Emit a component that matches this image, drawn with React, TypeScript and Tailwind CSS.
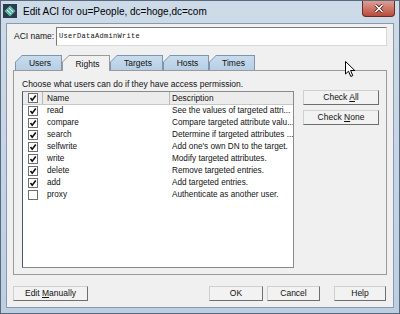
import React from "react";

const rights = [
  { name: "read", desc: "See the values of targeted attri...", on: true },
  { name: "compare", desc: "Compare targeted attribute valu...", on: true },
  { name: "search", desc: "Determine if targeted attributes ...", on: true },
  { name: "selfwrite", desc: "Add one's own DN to the target.", on: true },
  { name: "write", desc: "Modify targeted attributes.", on: true },
  { name: "delete", desc: "Remove targeted entries.", on: true },
  { name: "add", desc: "Add targeted entries.", on: true },
  { name: "proxy", desc: "Authenticate as another user.", on: false },
];

const Check = ({ on }: { on: boolean }) => (
  <div className="w-[10px] h-[10px] border border-[#6f6f6f] bg-white flex items-center justify-center">
    {on && (
      <svg width="8" height="8" viewBox="0 0 8 8">
        <path d="M1.5 4 L3.2 6.2 L6.8 1.5" stroke="#111" strokeWidth="1.6" fill="none" />
      </svg>
    )}
  </div>
);

const Btn = ({ children, w }: { children: React.ReactNode; w: string }) => (
  <button
    className={`${w} h-[15px] flex items-center justify-center bg-[#f2f2f2] border border-t-[#d0d0d0] border-l-[#d0d0d0] border-b-[#6e6e6e] border-r-[#6e6e6e] text-[8.5px] text-[#111] leading-none`}
  >
    <span className="whitespace-pre">{children}</span>
  </button>
);

const tabs = [
  { label: "Users", w: "w-[47px]" },
  { label: "Rights", w: "w-[48px]", sel: true },
  { label: "Targets", w: "w-[53px]" },
  { label: "Hosts", w: "w-[46px]" },
  { label: "Times", w: "w-[46px]" },
];

export default function App() {
  return (
    <div
      className="relative w-[400px] h-[314px] overflow-hidden flex flex-col border border-[#5a6a7c] bg-gradient-to-b from-[#cddbe9] to-[#bccfe2] text-[#111]"
      style={{ fontFamily: '"Liberation Sans", Arial, sans-serif' }}
    >
      {/* title bar */}
      <div className="h-[22px] flex items-start pl-[2px] shrink-0">
        <svg width="14" height="14" viewBox="0 0 14 14" className="mt-[3px]">
          <rect x="0" y="0" width="14" height="14" fill="#2c3b4c" />
          <path d="M7 1.5 L12.5 7 L7 12.5 L1.5 7 Z" fill="#5fb8a8" />
          <path d="M4 6 L8 10 M6 4 L10 8" stroke="#dff3ef" strokeWidth="1" />
        </svg>
        <span className="ml-[6px] mt-[4px] text-[10px] leading-[14px] text-black">
          Edit ACI for ou=People, dc=hoge,dc=com
        </span>
        <div className="ml-auto mr-[4px] w-[33px] h-[16px] rounded-b-[4px] border border-t-0 border-[#6a2b22] bg-gradient-to-b from-[#dba097] to-[#b94a3a] flex items-center justify-center">
          <svg width="10" height="9" viewBox="0 0 10 9">
            <path d="M1.5 1 L8.5 8 M8.5 1 L1.5 8" stroke="#3a1510" strokeWidth="3" />
            <path d="M1.5 1 L8.5 8 M8.5 1 L1.5 8" stroke="#fff" strokeWidth="1.6" />
          </svg>
        </div>
      </div>

      {/* client area */}
      <div className="mx-[5px] mb-[5px] flex-1 bg-[#f0f0f0] border border-[#8a9aab] flex flex-col px-[6px]">
        <div className="mt-[3px] flex items-center h-[19px]">
          <span className="text-[8.5px] w-[42px] ml-[1px] shrink-0 whitespace-nowrap">ACI name:</span>
          <div className="flex-1 h-[19px] bg-white border border-[#7c7c7c] border-r-[#d8d8d8] border-b-[#d8d8d8] flex items-center pl-[2px]">
            <span className="text-[7px] tracking-[0.3px]" style={{ fontFamily: '"Liberation Mono", "DejaVu Sans Mono", monospace' }}>
              UserDataAdminWrite
            </span>
          </div>
        </div>

        {/* tabs */}
        <div className="mt-[9px] flex items-end h-[15px] pl-[2px]">
          {tabs.map((t) => (
            <div
              key={t.label}
              className={`${t.w} h-[15px] bg-[#7f95ad] [clip-path:polygon(7px_0,100%_0,100%_100%,0_100%,0_7px)] ${t.sel ? "bg-[#9a9a9a] h-[16px] -mb-[1px] z-10" : ""}`}
            >
              <div
                className={`mt-[1px] ml-[1px] mr-[1px] h-full flex items-center justify-center pl-[3px] text-[8.5px] [clip-path:polygon(6px_0,100%_0,100%_100%,0_100%,0_6px)] ${t.sel ? "bg-[#f0f0f0]" : "bg-gradient-to-b from-[#c8dcee] to-[#b6cde3]"}`}
              >
                {t.label}
              </div>
            </div>
          ))}
        </div>

        {/* panel */}
        <div className="h-[205px] border border-[#9a9a9a] bg-[#f0f0f0] flex flex-col px-[8px]">
          <div className="mt-[8px] text-[8.5px] leading-[11px]">Choose what users can do if they have access permission.</div>
          <div className="mt-[1px] flex">
            <div className="w-[272px] h-[177px] bg-white border border-[#8a8a8a] border-l-[#4a5a6a] flex flex-col">
              <div className="h-[13px] flex text-[8.3px] border-b border-[#c8c8c8]">
                <div className="w-[20px] flex items-center justify-center bg-[#ececec] border-r border-[#b8b8b8]">
                  <Check on />
                </div>
                <div className="w-[127px] flex items-center pl-[4px] bg-[#ececec] border-r border-[#b8b8b8]">Name</div>
                <div className="flex-1 flex items-center pl-[2px] bg-[#ececec]">Description</div>
              </div>
              {rights.map((r) => (
                <div key={r.name} className="h-[12px] flex items-center text-[8.2px]">
                  <div className="w-[20px] flex justify-center">
                    <Check on={r.on} />
                  </div>
                  <div className="w-[127px] pl-[4px]">{r.name}</div>
                  <div className="flex-1 pl-[2px] whitespace-nowrap overflow-hidden">{r.desc}</div>
                </div>
              ))}
            </div>
            <div className="ml-[9px] flex flex-col gap-[5px] -mt-[1px]">
              <Btn w="w-[76px]">
                Check <span className="underline">A</span>ll
              </Btn>
              <Btn w="w-[76px]">
                Check <span className="underline">N</span>one
              </Btn>
            </div>
          </div>
        </div>

        {/* bottom buttons */}
        <div className="mt-[11px] flex">
          <Btn w="w-[75px]">
            Edit <span className="underline">M</span>anually
          </Btn>
          <div className="ml-auto flex gap-[4px] mr-[1px]">
            <Btn w="w-[54px]">OK</Btn>
            <Btn w="w-[53px]">Cancel</Btn>
            <div className="w-[6px]" />
            <Btn w="w-[52px]">Help</Btn>
          </div>
        </div>
      </div>

      {/* mouse cursor */}
      <svg className="absolute left-[344px] top-[60px]" width="11" height="17" viewBox="0 0 11 17">
        <path d="M0.5 0.5 L0.5 13 L3.5 10.2 L5.8 15.5 L7.8 14.6 L5.6 9.5 L9.8 9.5 Z" fill="#fff" stroke="#000" strokeWidth="1" />
      </svg>
    </div>
  );
}
